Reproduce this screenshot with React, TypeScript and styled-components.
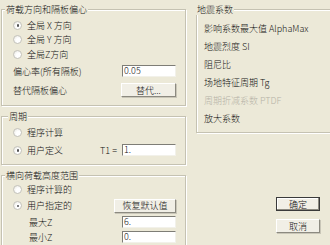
import React from "react";
import styled, { createGlobalStyle, css } from "styled-components";

const Global = createGlobalStyle`
  html, body { margin: 0; padding: 0; background: #ece9d8; }
  body { font-family: "Noto Sans CJK SC", "Noto Sans", sans-serif; font-size: 9px; font-weight: 300; color: #111; }
`;

const Page = styled.div`
  width: 330px;
  height: 245px;
  overflow: hidden;
  background: #ece9d8;
  display: grid;
  grid-template-columns: 185px 1fr;
  column-gap: 10px;
  padding: 4px 0 0 1px;
  box-sizing: border-box;
`;

const Column = styled.div`
  display: flex;
  flex-direction: column;
  gap: 5px;
  min-width: 0;
`;

const RightColumn = styled.div`
  display: flex;
  flex-direction: column;
  width: 150px;
`;

const Group = styled.fieldset<{ $h: number; $pt?: number; $open?: boolean }>`
  margin: 0;
  padding: ${(p) => p.$pt ?? 0}px 0 0 11px;
  height: ${(p) => p.$h}px;
  box-sizing: border-box;
  border: 1px solid #c5c2b2;
  box-shadow: inset 1px 1px 0 #fff, 1px 1px 0 #fff;
  ${(p) =>
    p.$open &&
    css`
      border-right: none;
    `}
  display: flex;
  flex-direction: column;
`;

const Legend = styled.legend<{ $ml?: number }>`
  padding: 0 1px;
  margin-left: ${(p) => p.$ml ?? -8}px;
  font-size: 9px;
  line-height: 11px;
  background: #ece9d8;
`;

const Row = styled.div<{ $h: number }>`
  display: flex;
  align-items: center;
  height: ${(p) => p.$h}px;
  white-space: nowrap;
`;

const RadioDot = styled.span<{ $on?: boolean }>`
  width: 9px;
  height: 9px;
  border-radius: 50%;
  box-sizing: border-box;
  border: 1px solid #c4c3bc;
  background: radial-gradient(circle at 65% 65%, #ffffff 35%, #e6e5de 100%);
  margin-right: 5px;
  position: relative;
  flex: none;
  ${(p) =>
    p.$on &&
    css`
      &::after {
        content: "";
        position: absolute;
        left: 2.5px;
        top: 2.5px;
        width: 2.5px;
        height: 2.5px;
        border-radius: 50%;
        background: #555;
      }
    `}
`;

const Label = styled.span<{ $w?: number; $indent?: number; $disabled?: boolean }>`
  display: inline-block;
  width: ${(p) => (p.$w ? `${p.$w}px` : "auto")};
  padding-left: ${(p) => p.$indent ?? 0}px;
  color: ${(p) => (p.$disabled ? "#b5b2a6" : "#111")};
  line-height: 11px;
  white-space: pre;
`;

const Spacer = styled.span`
  flex: 1;
`;

const Input = styled.div`
  width: 54px;
  height: 12px;
  box-sizing: border-box;
  background: #fff;
  border-top: 1px solid #7e7d76;
  border-left: 1px solid #7e7d76;
  border-bottom: 1px solid #f2f1ea;
  border-right: 1px solid #f2f1ea;
  font-size: 9px;
  line-height: 10px;
  padding-left: 1px;
  margin-right: 9px;
  flex: none;
`;

const Button = styled.div<{ $w: number; $default?: boolean }>`
  width: ${(p) => p.$w}px;
  height: 14px;
  box-sizing: border-box;
  background: #f1efe6;
  border-top: 1px solid #fff;
  border-left: 1px solid #fff;
  border-right: 1px solid #8c8a80;
  border-bottom: 1px solid #8c8a80;
  box-shadow: 1px 1px 0 #c9c6b8;
  ${(p) =>
    p.$default &&
    css`
      border: 1px solid #3a3a3a;
      box-shadow: inset -1px -1px 0 #8c8a80, inset 1px 1px 0 #fff;
    `}
  display: flex;
  align-items: center;
  justify-content: center;
  font-size: 9px;
  line-height: 11px;
  margin-right: 9px;
  flex: none;
`;

const RightGroup = styled(Group)`
  padding-left: 7px;
  padding-top: 8px;
  gap: 6px;
`;

const RightItem = styled.div<{ $disabled?: boolean }>`
  height: 12px;
  line-height: 12px;
  white-space: nowrap;
  color: ${(p) => (p.$disabled ? "#b5b2a6" : "#111")};
`;

const ActionStack = styled.div`
  display: flex;
  flex-direction: column;
  gap: 8px;
  padding: 64px 0 0 80px;
`;

const Radio = ({ on, children }: { on?: boolean; children: React.ReactNode }) => (
  <>
    <RadioDot $on={on} />
    <Label>{children}</Label>
  </>
);

export default function App() {
  return (
    <>
      <Global />
      <Page>
        <Column>
          <Group $h={102} $pt={3}>
            <Legend>荷载方向和隔板偏心</Legend>
            <Row $h={14}>
              <Radio on>全局 X 方向</Radio>
            </Row>
            <Row $h={15}>
              <Radio>全局 Y 方向</Radio>
            </Row>
            <Row $h={14}>
              <Radio>全局Z方向</Radio>
            </Row>
            <Row $h={20}>
              <Label>偏心率(所有隔板)</Label>
              <Spacer />
              <Input>0.05</Input>
            </Row>
            <Row $h={18}>
              <Label>替代隔板偏心</Label>
              <Spacer />
              <Button $w={55}>替代...</Button>
            </Row>
          </Group>
          <Group $h={54} $pt={2}>
            <Legend $ml={-5}>周期</Legend>
            <Row $h={17}>
              <Radio>程序计算</Radio>
            </Row>
            <Row $h={18}>
              <Radio on>用户定义</Radio>
              <Spacer />
              <Label>T1 =</Label>
              <Label $w={5} />
              <Input>1.</Input>
            </Row>
          </Group>
          <Group $h={90}>
            <Legend>横向荷载高度范围</Legend>
            <Row $h={17}>
              <Radio>程序计算的</Radio>
            </Row>
            <Row $h={15}>
              <Radio on>用户指定的</Radio>
              <Spacer />
              <Button $w={62}>恢复默认值</Button>
            </Row>
            <Row $h={18}>
              <Label $indent={16}>最大Z</Label>
              <Spacer />
              <Input>6.</Input>
            </Row>
            <Row $h={12}>
              <Label $indent={16}>最小Z</Label>
              <Spacer />
              <Input>0.</Input>
            </Row>
          </Group>
        </Column>
        <RightColumn>
          <RightGroup $h={129} $open>
            <Legend>地震系数</Legend>
            <RightItem>影响系数最大值 AlphaMax</RightItem>
            <RightItem>地震烈度 SI</RightItem>
            <RightItem>阻尼比</RightItem>
            <RightItem>场地特征周期 Tg</RightItem>
            <RightItem $disabled>周期折减系数 PTDF</RightItem>
            <RightItem>放大系数</RightItem>
          </RightGroup>
          <ActionStack>
            <Button $w={44} $default>确定</Button>
            <Button $w={44}>取消</Button>
          </ActionStack>
        </RightColumn>
      </Page>
    </>
  );
}
